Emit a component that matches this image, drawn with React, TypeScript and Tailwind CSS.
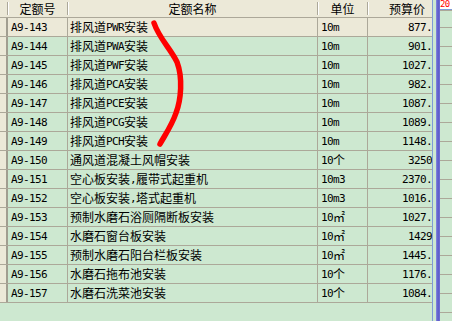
import React from 'react'

type Row = { code: string; name: string; unit: string; price: string }

const rows: Row[] = [
  { code: 'A9-143', name: '排风道PWR安装', unit: '10m', price: '877.' },
  { code: 'A9-144', name: '排风道PWA安装', unit: '10m', price: '901.' },
  { code: 'A9-145', name: '排风道PWF安装', unit: '10m', price: '1027.' },
  { code: 'A9-146', name: '排风道PCA安装', unit: '10m', price: '982.' },
  { code: 'A9-147', name: '排风道PCE安装', unit: '10m', price: '1087.' },
  { code: 'A9-148', name: '排风道PCG安装', unit: '10m', price: '1089.' },
  { code: 'A9-149', name: '排风道PCH安装', unit: '10m', price: '1148.' },
  { code: 'A9-150', name: '通风道混凝土风帽安装', unit: '10个', price: '3250' },
  { code: 'A9-151', name: '空心板安装,履带式起重机', unit: '10m3', price: '2370.' },
  { code: 'A9-152', name: '空心板安装,塔式起重机', unit: '10m3', price: '1016.' },
  { code: 'A9-153', name: '预制水磨石浴厕隔断板安装', unit: '10㎡', price: '1027.' },
  { code: 'A9-154', name: '水磨石窗台板安装', unit: '10㎡', price: '1429' },
  { code: 'A9-155', name: '预制水磨石阳台栏板安装', unit: '10㎡', price: '1445.' },
  { code: 'A9-156', name: '水磨石拖布池安装', unit: '10个', price: '1176.' },
  { code: 'A9-157', name: '水磨石洗菜池安装', unit: '10个', price: '1084.' },
]

// ascii runs get a half-width mono face so they line up like the old grid font
function Txt({ s }: { s: string }) {
  const parts = s.match(/[\x20-\x7e]+|[^\x20-\x7e]+/g) ?? []
  return (
    <>
      {parts.map((p, i) =>
        /^[\x20-\x7e]/.test(p) ? (
          <span key={i} className="font-['DejaVu_Sans_Mono',monospace] text-[11px] tracking-[-0.62px]">
            {p}
          </span>
        ) : (
          <span key={i}>{p}</span>
        )
      )}
    </>
  )
}

function HeadCell({ label, className = '' }: { label: string; className?: string }) {
  return (
    <div className="flex items-center h-full">
      <span className={`flex-1 whitespace-nowrap ${className}`}>{label}</span>
      <span className="w-px h-[13px] bg-[#aca899] shadow-[1px_0_0_#ffffff]" />
    </div>
  )
}

export default function App() {
  return (
    <div className="flex w-[452px] h-[321px] overflow-hidden bg-[#cde8d0] text-black text-[12px] leading-none font-['Noto_Sans_CJK_SC',sans-serif]">
      {/* main grid */}
      <div className="relative w-[433px] h-full border-r border-[#7f9bd6]">
        <div className="grid grid-cols-[8px_60px_250px_50px_64px] h-[18px] bg-[#ece9d8] border-b border-[#aca899]">
          <HeadCell label="" />
          <HeadCell label="定额号" className="text-center" />
          <HeadCell label="定额名称" className="text-center" />
          <HeadCell label="单位" className="text-center" />
          <div className="flex items-center h-full pl-[21px]">预算价</div>
        </div>

        {rows.map((r, i) => (
          <div
            key={r.code}
            className={`grid grid-cols-[8px_60px_250px_50px_64px] h-[19px] border-b border-[#aca899] ${
              i === 0 ? 'bg-[#ece9d8]' : ''
            }`}
          >
            <div className="bg-[#ece9d8] border-r-2 border-[#a19e90]" />
            <div className="flex items-center pl-[3px] border-r border-[#aca899] whitespace-nowrap overflow-hidden">
              <Txt s={r.code} />
            </div>
            <div className="flex items-center pl-[2px] border-r border-[#aca899] whitespace-nowrap overflow-hidden">
              <Txt s={r.name} />
            </div>
            <div className="flex items-center pl-[3px] border-r border-[#aca899] whitespace-nowrap overflow-hidden">
              <Txt s={r.unit} />
            </div>
            <div className="flex items-center justify-end whitespace-nowrap overflow-hidden">
              <Txt s={r.price} />
            </div>
          </div>
        ))}

        {/* red pen mark drawn over the grid */}
        <svg className="absolute left-0 top-0 pointer-events-none" width="433" height="321" viewBox="0 0 433 321">
          <path
            d="M154,23 C159,38 170,48 177,62 C183,78 181,100 176,113 C172,125 165,135 160,144"
            fill="none"
            stroke="#ff0000"
            strokeWidth="5.5"
            strokeLinecap="round"
          />
        </svg>
      </div>

      {/* neighbouring pane */}
      <div className="flex h-full flex-1">
        <div className="w-[3px]" />
        <div className="w-[4px] h-full bg-gradient-to-r from-[#8a8ae0] via-[#5a5ac8] to-[#7070d4]" />
        <div className="flex-1 flex flex-col">
          <div className="h-[10px] bg-white border-b border-[#7f9bd6] flex items-start">
            <span className="text-[#ff0000] font-['DejaVu_Sans_Mono',monospace] text-[9px] leading-[9px] tracking-[-0.6px]">20</span>
          </div>
          <div className="h-[18px] border-t border-[#aca899] border-b border-b-[#aca899]" />
          {Array.from({ length: 15 }).map((_, i) => (
            <div key={i} className="h-[19px] shrink-0 border-b border-[#aca899]" />
          ))}
        </div>
      </div>
    </div>
  )
}
